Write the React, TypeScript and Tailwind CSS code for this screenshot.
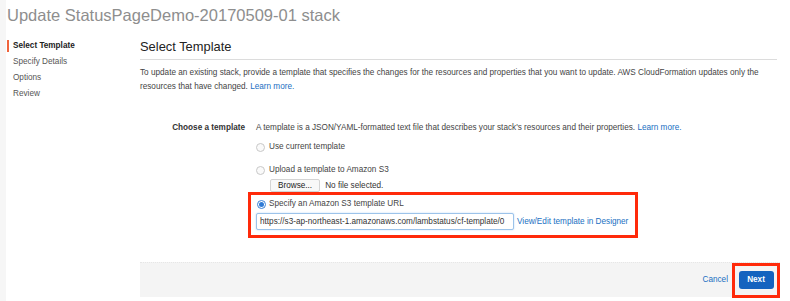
import React from "react";

function Radio({ checked = false }: { checked?: boolean }) {
  return (
    <span
      className={
        "inline-flex h-[9px] w-[9px] shrink-0 items-center justify-center rounded-full border " +
        (checked ? "border-[#3b82d6] bg-white" : "border-[#c8c8c8] bg-[#fafafa]")
      }
    >
      {checked && <span className="h-[5px] w-[5px] rounded-full bg-[#2f7bd6]" />}
    </span>
  );
}

export default function App() {
  return (
    <div
      className="relative h-[301px] w-[790px] overflow-hidden bg-white text-[#444]"
      style={{ fontFamily: '"Liberation Sans", Arial, sans-serif' }}
    >
      <div className="absolute left-0 top-0 h-full w-[6px] bg-[#f6f6f6]" />
      <div className="pl-[7px] pt-[4px] text-[16.5px] leading-[22px] text-[#8e8e8e]">
        Update StatusPageDemo-20170509-01 stack
      </div>
      <div className="mt-[12px] flex">
        <nav className="w-[140px] shrink-0 pl-[7px] text-[8.2px] leading-[16px]">
          <div className="flex items-center">
            <span className="mr-[4px] h-[12px] w-[2px] bg-[#f0643c]" />
            <span className="font-bold text-[#222]">Select Template</span>
          </div>
          <div className="pl-[6px] text-[#555]">Specify Details</div>
          <div className="pl-[6px] text-[#555]">Options</div>
          <div className="pl-[6px] text-[#555]">Review</div>
        </nav>
        <main className="flex w-[640px] flex-col">
          <div className="mr-[3px] border-b border-[#dcdcdc] pb-[4px] pt-[0px] text-[12.9px] leading-[17px] text-[#222]">
            Select Template
          </div>
          <p className="mr-[3px] mt-[6px] text-[8.2px] leading-[14px] text-[#444]">
            To update an existing stack, provide a template that specifies the changes for the resources and
            properties that you want to update. AWS CloudFormation updates only the resources that have changed.{" "}
            <span className="text-[#1a6fc2]">Learn more.</span>
          </p>
          <div className="mt-[28px] flex text-[8.2px] leading-[12px]">
            <div className="w-[105px] shrink-0 text-right font-bold text-[#333]">Choose a template</div>
            <div className="ml-[11px] flex flex-col">
              <div className="text-[#444]">
                A template is a JSON/YAML-formatted text file that describes your stack&apos;s resources and their
                properties. <span className="text-[#1a6fc2]">Learn more.</span>
              </div>
              <div className="mt-[7px] flex items-center gap-[4px]">
                <Radio />
                <span>Use current template</span>
              </div>
              <div className="mt-[11px] flex items-center gap-[4px]">
                <Radio />
                <span>Upload a template to Amazon S3</span>
              </div>
              <div className="mt-[3px] flex items-center pl-[14px]">
                <span className="rounded-[2px] border border-[#d4d4d4] bg-[#f8f8f8] px-[7px] text-[8.2px] leading-[11px] text-[#222]">
                  Browse...
                </span>
                <span className="ml-[5px] text-[#333]">No file selected.</span>
              </div>
              <div className="ml-[-8px] mt-[0px] w-[390px] border-[3px] border-[#ff2a0a] px-[5px] pb-[5px] pt-[3px]">
                <div className="flex items-center gap-[3px] pl-[1px]">
                  <Radio checked />
                  <span>Specify an Amazon S3 template URL</span>
                </div>
                <div className="mt-[3px] flex items-center">
                  <div className="h-[17px] w-[258px] shrink-0 overflow-hidden whitespace-nowrap rounded-[2px] border border-[#9cc3ea] bg-white px-[3px] text-[8.2px] leading-[15px] text-[#333] shadow-[0_0_2px_#b9d7f5]">
                    https://s3-ap-northeast-1.amazonaws.com/lambstatus/cf-template/0
                  </div>
                  <span className="ml-[3px] whitespace-nowrap text-[#1a6fc2]">View/Edit template in Designer</span>
                </div>
              </div>
            </div>
          </div>
          <div className="mt-[24px] flex h-[35px] items-center justify-end border-t border-dotted border-[#e6e6e6] bg-[#f4f4f4]">
            <span className="mr-[4px] text-[8.2px] text-[#1a6fc2]">Cancel</span>
            <div className="flex h-[35px] w-[48px] items-center justify-center border-[3px] border-[#ff2a0a]">
              <span className="flex h-[18px] w-[35px] items-center justify-center rounded-[3px] bg-[#1463bf] text-[8.2px] font-bold text-white">
                Next
              </span>
            </div>
          </div>
        </main>
      </div>
    </div>
  );
}
